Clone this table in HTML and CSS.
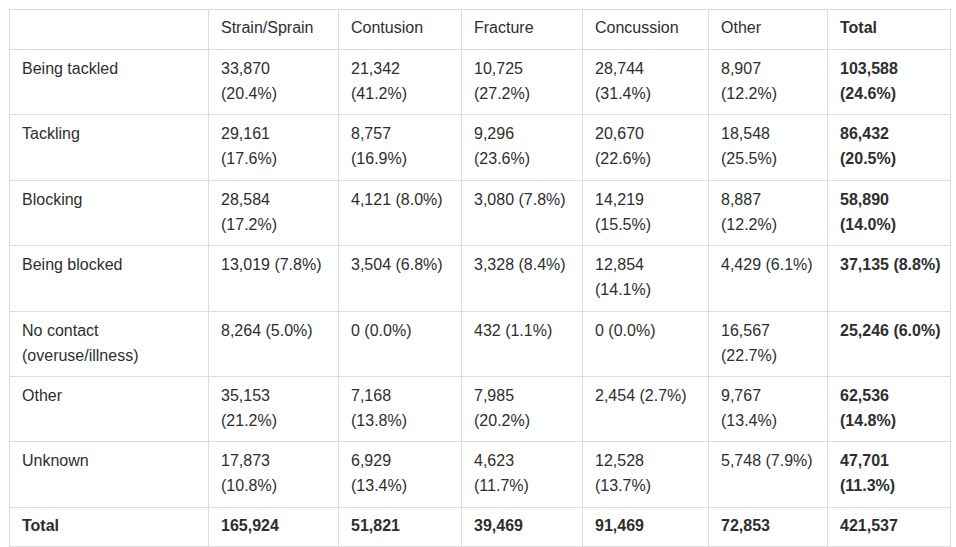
FILE: index.html
```html
<!DOCTYPE html>
<html>
<head>
<meta charset="utf-8">
<link rel="stylesheet" href="styles.css">
</head>
<body>
<table class="data">
  <colgroup>
    <col class="c1"><col class="c2"><col class="c3"><col class="c4"><col class="c5"><col class="c6"><col class="c7">
  </colgroup>
  <thead>
    <tr><th></th><th>Strain/Sprain</th><th>Contusion</th><th>Fracture</th><th>Concussion</th><th>Other</th><th class="b">Total</th></tr>
  </thead>
  <tbody>
    <tr><td>Being tackled</td><td>33,870<br>(20.4%)</td><td>21,342<br>(41.2%)</td><td>10,725<br>(27.2%)</td><td>28,744<br>(31.4%)</td><td>8,907<br>(12.2%)</td><td class="b">103,588<br>(24.6%)</td></tr>
    <tr><td>Tackling</td><td>29,161<br>(17.6%)</td><td>8,757<br>(16.9%)</td><td>9,296<br>(23.6%)</td><td>20,670<br>(22.6%)</td><td>18,548<br>(25.5%)</td><td class="b">86,432<br>(20.5%)</td></tr>
    <tr><td>Blocking</td><td>28,584<br>(17.2%)</td><td>4,121 (8.0%)</td><td>3,080 (7.8%)</td><td>14,219<br>(15.5%)</td><td>8,887<br>(12.2%)</td><td class="b">58,890<br>(14.0%)</td></tr>
    <tr><td>Being blocked</td><td>13,019 (7.8%)</td><td>3,504 (6.8%)</td><td>3,328 (8.4%)</td><td>12,854<br>(14.1%)</td><td>4,429 (6.1%)</td><td class="b">37,135 (8.8%)</td></tr>
    <tr><td>No contact<br>(overuse/illness)</td><td>8,264 (5.0%)</td><td>0 (0.0%)</td><td>432 (1.1%)</td><td>0 (0.0%)</td><td>16,567<br>(22.7%)</td><td class="b">25,246 (6.0%)</td></tr>
    <tr><td>Other</td><td>35,153<br>(21.2%)</td><td>7,168<br>(13.8%)</td><td>7,985<br>(20.2%)</td><td>2,454 (2.7%)</td><td>9,767<br>(13.4%)</td><td class="b">62,536<br>(14.8%)</td></tr>
    <tr><td>Unknown</td><td>17,873<br>(10.8%)</td><td>6,929<br>(13.4%)</td><td>4,623<br>(11.7%)</td><td>12,528<br>(13.7%)</td><td>5,748 (7.9%)</td><td class="b">47,701<br>(11.3%)</td></tr>
  </tbody>
  <tfoot>
    <tr><td>Total</td><td>165,924</td><td>51,821</td><td>39,469</td><td>91,469</td><td>72,853</td><td>421,537</td></tr>
  </tfoot>
</table>
</body>
</html>
```

FILE: styles.css
```css
html, body {
  margin: 0;
  padding: 0;
  background: #ffffff;
}
body {
  padding: 9px 0 0 9px;
  font-family: "Liberation Sans", Arial, sans-serif;
  font-size: 16px;
  color: #2e2e2e;
}
.data {
  border-collapse: collapse;
  table-layout: fixed;
  width: 941px;
}
.c1 { width: 199px; }
.c2 { width: 130px; }
.c3 { width: 123px; }
.c4 { width: 121px; }
.c5 { width: 126px; }
.c6 { width: 119px; }
.c7 { width: 123px; }
.data th, .data td {
  border: 1px solid #dddddd;
  text-align: left;
  vertical-align: top;
  white-space: nowrap;
  line-height: 25px;
  padding: 6px 10px 8.4px 12px;
}
.data th {
  font-weight: normal;
  padding-top: 5px;
  padding-bottom: 9px;
}
.data .b, .data tfoot td {
  font-weight: bold;
}
.data tfoot td {
  padding-top: 5px;
  padding-bottom: 8px;
}
```
